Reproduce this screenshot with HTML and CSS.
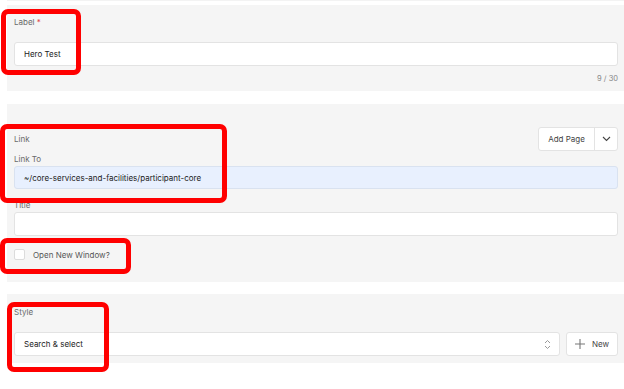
FILE: index.html
```html
<!DOCTYPE html>
<html lang="en">
<head>
    <meta charset="UTF-8">
    <meta name="viewport" content="width=device-width, initial-scale=1.0">
    <title>Hero block editor</title>
    <link rel="stylesheet" href="styles.css">
</head>
<body>
    <div class="editor">
        <div class="panel-edge"></div>

        <div class="panel panel-label">
            <div class="field-label">Label <span class="req">*</span></div>
            <input class="text-input" type="text" value="Hero Test">
            <div class="counter">9 / 30</div>
        </div>

        <div class="panel panel-link">
            <div class="panel-head">
                <span class="field-label">Link</span>
                <div class="split-btn">
                    <button class="split-main">Add Page</button>
                    <button class="split-toggle">
                        <svg width="9" height="6" viewBox="0 0 9 6"><path d="M1 1l3.5 3.5L8 1" fill="none" stroke="#444" stroke-width="1.1"/></svg>
                    </button>
                </div>
            </div>
            <div class="field-label">Link To</div>
            <input class="text-input filled" type="text" value="~/core-services-and-facilities/participant-core">
            <div class="field-label title-label">Title</div>
            <input class="text-input" type="text" value="">
            <label class="check-row">
                <span class="check-box"></span>
                <span>Open New Window?</span>
            </label>
        </div>

        <div class="panel panel-style">
            <div class="field-label">Style</div>
            <div class="select-row">
                <div class="select-box">
                    <span>Search &amp; select</span>
                    <svg width="7" height="11" viewBox="0 0 7 11"><path d="M1 4l2.5-2.5L6 4M1 7l2.5 2.5L6 7" fill="none" stroke="#999" stroke-width="1"/></svg>
                </div>
                <button class="new-btn">
                    <svg width="10" height="10" viewBox="0 0 10 10"><path d="M5 0v10M0 5h10" stroke="#777" stroke-width="1.1"/></svg>
                    New
                </button>
            </div>
        </div>

        <!-- red annotation marks drawn over the form -->
        <div class="mark mark-1"></div>
        <div class="mark mark-2"></div>
        <div class="mark mark-3"></div>
        <div class="mark mark-4"></div>
    </div>
</body>
</html>
```

FILE: styles.css
```css
* {
    box-sizing: border-box;
    font-family: Inter, 'Noto Sans', sans-serif;
}

body {
    margin: 0;
    background: #fff;
}

.editor {
    position: relative;
    width: 624px;
    height: 389px;
    padding-left: 7px;
    overflow: hidden;
}

.panel-edge {
    height: 1px;
    background: #f3f3f3;
    margin-bottom: 4px;
}

.panel {
    background: #f5f5f5;
    padding: 0 6px 0 7px;
}

.field-label {
    font-size: 8px;
    line-height: 14px;
    color: #6a6a6a;
}

.req {
    color: #e0434a;
}

.text-input {
    display: block;
    width: 100%;
    height: 24px;
    padding: 0 9px;
    border: 1px solid #e3e3e3;
    border-radius: 3px;
    background: #fff;
    font-size: 8px;
    color: #222;
    outline: none;
}

.text-input.filled {
    background: #e8f0fe;
    border-color: #d9e2f0;
    height: 23px;
}

/* label panel */
.panel-label {
    padding-top: 10px;
    padding-bottom: 5px;
}

.panel-label .text-input {
    margin-top: 13px;
}

.counter {
    margin-top: 6px;
    font-size: 7.5px;
    line-height: 14px;
    color: #888;
    text-align: right;
}

/* link panel */
.panel-link {
    margin-top: 13px;
    padding-top: 23px;
    padding-bottom: 22px;
}

.panel-head {
    display: flex;
    justify-content: space-between;
    align-items: center;
    height: 24px;
    margin-bottom: 1px;
}

.split-btn {
    display: flex;
    height: 24px;
    border: 1px solid #e3e3e3;
    border-radius: 3px;
    background: #fff;
}

.split-btn button {
    border: none;
    background: none;
    padding: 0;
    cursor: pointer;
}

.split-main {
    width: 56px;
    font-size: 8px;
    color: #444;
    border-right: 1px solid #e3e3e3 !important;
}

.split-toggle {
    width: 22px;
    display: flex;
    align-items: center;
    justify-content: center;
}

.title-label {
    margin-top: 9px;
}

.check-row {
    display: flex;
    align-items: center;
    gap: 8px;
    margin-top: 13px;
    font-size: 8px;
    color: #555;
}

.check-box {
    width: 11px;
    height: 11px;
    border: 1px solid #dcdcdc;
    border-radius: 2px;
    background: #fff;
}

/* style panel */
.panel-style {
    margin-top: 12px;
    padding-top: 11px;
    padding-bottom: 7px;
}

.select-row {
    display: flex;
    gap: 6px;
    margin-top: 13px;
}

.select-box {
    flex: 1;
    display: flex;
    align-items: center;
    justify-content: space-between;
    height: 24px;
    padding: 0 8px 0 9px;
    border: 1px solid #e3e3e3;
    border-radius: 3px;
    background: #fff;
    font-size: 8px;
    color: #222;
}

.new-btn {
    display: flex;
    align-items: center;
    gap: 7px;
    width: 52px;
    height: 24px;
    padding: 0 0 0 8px;
    border: 1px solid #e3e3e3;
    border-radius: 3px;
    background: #fff;
    font-size: 8px;
    color: #444;
}

/* annotations */
.mark {
    position: absolute;
    border: 5px solid #ff0000;
    border-radius: 7px;
}

.mark-1 { left: 1px; top: 9px; width: 80px; height: 66px; }
.mark-2 { left: 0; top: 124px; width: 227px; height: 79px; }
.mark-3 { left: 0; top: 238px; width: 131px; height: 36px; }
.mark-4 { left: 7px; top: 302px; width: 102px; height: 70px; }
```
